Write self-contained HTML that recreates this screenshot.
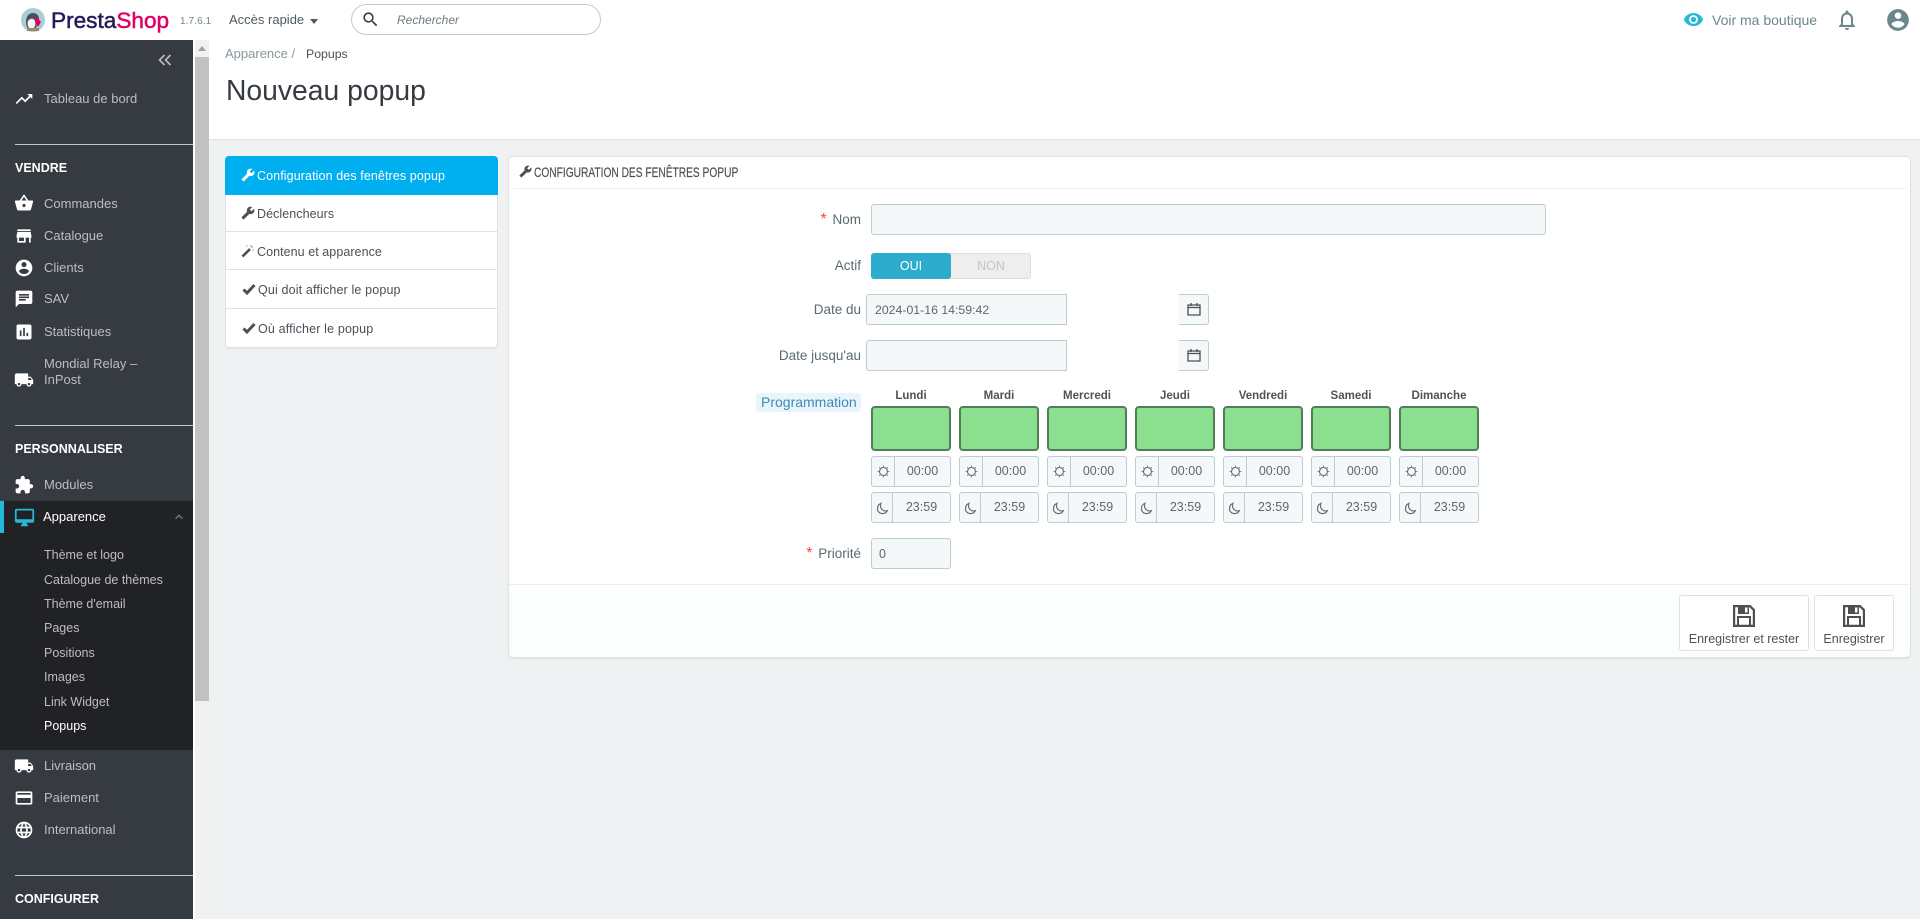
<!DOCTYPE html>
<html lang="fr">
<head>
<meta charset="utf-8">
<title>Nouveau popup</title>
<style>
*{box-sizing:border-box}
html,body{margin:0;padding:0;width:1920px;height:919px;overflow:hidden;background:#eff1f2;font-family:"Liberation Sans",sans-serif;color:#363a41}
.a{position:absolute}
.t{position:absolute;white-space:nowrap;line-height:20px;font-size:13px}
#top{left:0;top:0;width:1920px;height:40px;background:#fff}
#side{left:0;top:40px;width:193px;height:879px;background:#363a41;overflow:hidden}
#sub{left:0;top:461px;width:193px;height:249px;background:#202226}
.m{color:#bebebe;left:44px;font-size:13px}
.s{color:#bebebe;left:44px;font-size:12.5px}
.h{color:#fff;left:15px;font-weight:bold;font-size:12.5px}
.hr{left:15px;width:178px;height:1px;background:#bbcdd2}
svg{position:absolute;display:block}
.ic{fill:#fff;width:20px;height:20px;left:14px}
.tab{left:225px;width:273px;background:#fff;border:1px solid #dfe2e5;border-top:0}
.tabt{left:257px;color:#4a5058;font-size:12.5px;letter-spacing:.06px}
.lab{right:1059px;color:#5b6a72;text-align:right;font-size:13.5px}
.lab span{font-size:16px;line-height:16px;margin-right:2px}
.in{background:#f5f8f9;border:1px solid #bbcdd2;border-radius:3px}
.day{position:absolute;top:385px;width:80px;height:140px}
.day b{position:absolute;left:-8px;width:96px;top:1px;text-align:center;font-size:11.5px;line-height:20px;color:#4f5358}
.g{position:absolute;left:0;top:21px;width:80px;height:45px;background:#8bdf8f;border:2px solid #4f7f59;border-radius:4px}
.tm{position:absolute;left:0;width:80px;height:31px;background:#f5f8f9;border:1px solid #bbcdd2;border-radius:3px;font-size:12.5px;line-height:29px;color:#5c6770}
.tm i{position:absolute;top:0;bottom:0;width:1px;background:#bbcdd2}
.tm span{position:absolute;right:0;text-align:center;font-style:normal}
.su{top:71px}.mo{top:107px}
.su i{left:22px}.su span{left:23px}
.mo i{left:20px}.mo span{left:21px}
.tm svg{fill:none;stroke:#5c6770;stroke-width:1.1}
.su svg{left:5px;top:8px;width:13px;height:13px}
.mo svg{left:4px;top:9px;width:13px;height:13px}
.btn{top:595px;height:56px;background:#fff;border:1px solid #dfe2e5;border-radius:3px}
.btn svg{fill:#4d4f53}
.btn span{position:absolute;left:0;right:0;text-align:center;top:33px;font-size:12.5px;line-height:20px;color:#4d5058;white-space:nowrap}
</style>
</head>
<body>
<svg width="0" height="0" style="position:absolute">
<defs>
<symbol id="truck" viewBox="0 0 24 24"><path d="M20 8h-3V4H3c-1.100 0-2 .9-2 2v11h2c0 1.660 1.340 3 3 3s3-1.340 3-3h6c0 1.660 1.340 3 3 3s3-1.340 3-3h2v-5l-3-4zM6 18.500c-.83 0-1.500-.67-1.500-1.500s.67-1.500 1.500-1.500 1.500.67 1.500 1.500-.67 1.500-1.500 1.500zm13.500-9l1.960 2.500H17V9.500h2.500zm-1.500 9c-.83 0-1.500-.67-1.500-1.500s.67-1.500 1.500-1.500 1.500.67 1.500 1.500-.67 1.500-1.500 1.500z"/></symbol>
<symbol id="sun" viewBox="0 0 13 13"><circle cx="6.500" cy="6.500" r="4"/><path d="M6.500 .6v1.100M6.500 11.300v1.100M.6 6.500h1.100M11.300 6.500h1.100M2.300 2.300l.8.8M9.900 9.900l.8.8M2.300 10.700l.8-.8M9.900 3.100l.8-.8" stroke-width="1"/></symbol>
<symbol id="moon" viewBox="0 0 13 13"><path d="M5 1.200C2.800 2.200 1.500 4.200 1.500 6.700c0 2.900 2.200 4.900 4.900 4.900 2.200 0 4-1.100 5-3C8 9.800 4.300 7.500 4.600 3.700 4.600 2.800 4.700 2 5 1.200z"/></symbol>
<symbol id="save" viewBox="0 0 24 24"><path fill-rule="evenodd" d="M1 1h17.500L23 5.500V23H1zM3.200 3.200V20.800H5V12h14v8.800h1.800V6.500L17.500 3.200H17V10H6V3.200zM7 14v6.800h10V14zM13 3.500v5h2.500v-5z"/></symbol>
<symbol id="wrench" viewBox="0 0 24 24"><path transform="translate(24 0) scale(-1 1)" d="M22.700 19l-9.100-9.100c.9-2.300.4-5-1.500-6.900-2-2-5-2.400-7.400-1.300L9 6 6 9 1.600 4.700C.4 7.100.9 10.100 2.900 12.100c1.900 1.900 4.600 2.400 6.900 1.500l9.100 9.100c.4.4 1 .4 1.400 0l2.300-2.300c.5-.4.5-1.100.1-1.400z"/></symbol>
<symbol id="cal" viewBox="0 0 14 14"><path d="M1 3h12v10H1zM1 5.500h12M4 1v3M10 1v3" fill="none" stroke="#4d4f53" stroke-width="1.300"/></symbol>
</defs>
</svg>

<div id="top" class="a">
  <svg style="left:21px;top:8px" width="24" height="24" viewBox="0 0 24 24">
    <circle cx="12" cy="12" r="12" fill="#a8cfd9"/>
    <path d="M5 14c0-6 3-9 7-9s6 3 6 6l-2 3-1 7H8c-2-1-3-4-3-7z" fill="#4a5258"/>
    <path d="M7 13c2-3 6-3 7 0 1 3 0 6-2 8H9c-2-2-3-5-2-8z" fill="#f4f4f4"/>
    <path d="M15 8l5 6-3 5-3-5z" fill="#df0067"/>
    <rect x="6" y="20" width="12" height="3" fill="#a08a66"/>
  </svg>
  <div class="t" style="left:51px;top:9px;font-size:22.600px;line-height:24px;color:#251b5b;-webkit-text-stroke:.5px #251b5b">Presta<span style="color:#df0067;-webkit-text-stroke:.5px #df0067">Shop</span></div>
  <div class="t" style="left:180px;top:12px;font-size:10px;color:#6c868e;letter-spacing:.1px">1.7.6.1</div>
  <div class="t" style="left:229px;top:10px;font-size:13px;color:#4d5a62">Accès rapide</div>
  <div class="a" style="left:310px;top:19px;width:0;height:0;border-left:4.500px solid transparent;border-right:4.500px solid transparent;border-top:5px solid #4d5a62"></div>
  <div class="a" style="left:351px;top:4px;width:250px;height:31px;border:1px solid #bbcdd2;border-radius:16px;background:#fff"></div>
  <svg style="left:361px;top:10px;fill:#363a41" width="19" height="19" viewBox="0 0 24 24"><path d="M15.500 14h-.79l-.28-.27C15.410 12.590 16 11.110 16 9.500 16 5.910 13.090 3 9.500 3S3 5.910 3 9.500 5.910 16 9.500 16c1.610 0 3.090-.59 4.230-1.570l.27.28v.79l5 4.990L20.490 19l-4.990-5zm-6 0C7.010 14 5 11.990 5 9.500S7.010 5 9.500 5 14 7.010 14 9.500 11.990 14 9.500 14z"/></svg>
  <div class="t" style="left:397px;top:10px;font-size:12px;font-style:italic;color:#6c7a82">Rechercher</div>
  <svg style="left:1683px;top:9px;fill:#25b9d7" width="21" height="21" viewBox="0 0 24 24"><path d="M12 4.500C7 4.500 2.730 7.610 1 12c1.730 4.390 6 7.500 11 7.500s9.270-3.110 11-7.500c-1.730-4.390-6-7.500-11-7.500zM12 17c-2.760 0-5-2.240-5-5s2.240-5 5-5 5 2.240 5 5-2.240 5-5 5zm0-8c-1.660 0-3 1.340-3 3s1.340 3 3 3 3-1.340 3-3-1.340-3-3-3z"/></svg>
  <div class="t" style="left:1712px;top:10px;font-size:14px;color:#6c868e">Voir ma boutique</div>
  <svg style="left:1835px;top:8px;fill:#6c868e" width="24" height="24" viewBox="0 0 24 24"><path d="M12 22c1.100 0 2-.9 2-2h-4c0 1.100.9 2 2 2zm6-6v-5c0-3.070-1.640-5.640-4.500-6.320V4c0-.83-.67-1.500-1.500-1.500s-1.500.67-1.500 1.500v.68C7.630 5.360 6 7.920 6 11v5l-2 2v1h16v-1l-2-2zm-2 1H8v-6c0-2.480 1.510-4.500 4-4.500s4 2.020 4 4.500v6z"/></svg>
  <svg style="left:1885px;top:7px;fill:#6c868e" width="26" height="26" viewBox="0 0 24 24"><path d="M12 2C6.480 2 2 6.480 2 12s4.480 10 10 10 10-4.480 10-10S17.520 2 12 2zm0 3c1.660 0 3 1.340 3 3s-1.340 3-3 3-3-1.340-3-3 1.340-3 3-3zm0 14.200c-2.500 0-4.710-1.280-6-3.220.03-1.990 4-3.080 6-3.080 1.990 0 5.970 1.090 6 3.080-1.290 1.940-3.500 3.220-6 3.220z"/></svg>
</div>

<div id="side" class="a">
  <svg style="left:158px;top:14px;fill:none;stroke:#bebebe;stroke-width:1.600" width="14" height="12" viewBox="0 0 14 12"><path d="M6.500 1L1.500 6l5 5M12.500 1l-5 5 5 5"/></svg>
  <svg class="ic" style="top:49px;fill:#fff" viewBox="0 0 24 24"><path d="M16 6l2.290 2.290-4.880 4.880-4-4L2 16.590 3.410 18l6-6 4 4 6.300-6.290L22 12V6z"/></svg>
  <div class="t m" style="top:49px">Tableau de bord</div>
  <div class="a hr" style="top:104px"></div>
  <div class="t h" style="top:118px">VENDRE</div>
  <svg class="ic" style="top:153px" viewBox="0 0 24 24"><path d="M17.210 9l-4.380-6.560c-.19-.28-.51-.42-.83-.42-.32 0-.64.14-.83.430L6.790 9H2c-.55 0-1 .45-1 1 0 .09.01.18.04.27l2.540 9.270c.23.84 1 1.460 1.920 1.460h13c.92 0 1.690-.62 1.930-1.460l2.540-9.270L23 10c0-.55-.45-1-1-1h-4.790zM9 9l3-4.400L15 9H9zm3 8c-1.100 0-2-.9-2-2s.9-2 2-2 2 .9 2 2-.9 2-2 2z"/></svg>
  <div class="t m" style="top:154px">Commandes</div>
  <svg class="ic" style="top:186px" viewBox="0 0 24 24"><path d="M20 4H4v2h16V4zm1 10v-2l-1-5H4l-1 5v2h1v6h10v-6h4v6h2v-6h1zm-9 4H6v-4h6v4z"/></svg>
  <div class="t m" style="top:186px">Catalogue</div>
  <svg class="ic" style="top:218px" viewBox="0 0 24 24"><path d="M12 2C6.480 2 2 6.480 2 12s4.480 10 10 10 10-4.480 10-10S17.520 2 12 2zm0 3c1.660 0 3 1.340 3 3s-1.340 3-3 3-3-1.340-3-3 1.340-3 3-3zm0 14.200c-2.500 0-4.710-1.280-6-3.220.03-1.990 4-3.080 6-3.080 1.990 0 5.970 1.090 6 3.080-1.290 1.940-3.500 3.220-6 3.220z"/></svg>
  <div class="t m" style="top:218px">Clients</div>
  <svg class="ic" style="top:249px" viewBox="0 0 24 24"><path d="M20 2H4c-1.100 0-1.990.9-1.990 2L2 22l4-4h14c1.100 0 2-.9 2-2V4c0-1.100-.9-2-2-2zM6 9h12v2H6V9zm8 5H6v-2h8v2zm4-6H6V6h12v2z"/></svg>
  <div class="t m" style="top:249px">SAV</div>
  <svg class="ic" style="top:282px" viewBox="0 0 24 24"><path d="M19 3H5c-1.100 0-2 .9-2 2v14c0 1.100.9 2 2 2h14c1.100 0 2-.9 2-2V5c0-1.100-.9-2-2-2zM9 17H7v-7h2v7zm4 0h-2V7h2v10zm4 0h-2v-4h2v4z"/></svg>
  <div class="t m" style="top:282px">Statistiques</div>
  <svg class="ic" style="top:330px"><use href="#truck"/></svg>
  <div class="t m" style="top:314px">Mondial Relay –</div>
  <div class="t m" style="top:330px">InPost</div>
  <div class="a hr" style="top:385px"></div>
  <div class="t h" style="top:399px">PERSONNALISER</div>
  <svg class="ic" style="top:435px" viewBox="0 0 24 24"><path d="M20.500 11H19V7c0-1.100-.9-2-2-2h-4V3.500C13 2.120 11.880 1 10.500 1S8 2.120 8 3.500V5H4c-1.100 0-1.990.9-1.990 2v3.800H3.500c1.490 0 2.700 1.210 2.700 2.700s-1.210 2.700-2.700 2.700H2V20c0 1.100.9 2 2 2h3.800v-1.500c0-1.490 1.210-2.700 2.700-2.700 1.490 0 2.700 1.210 2.700 2.700V22H17c1.100 0 2-.9 2-2v-4h1.500c1.380 0 2.500-1.120 2.500-2.500S21.880 11 20.500 11z"/></svg>
  <div class="t m" style="top:435px">Modules</div>

  <div id="sub" class="a"></div>
  <div class="a" style="left:0;top:461px;width:4px;height:32px;background:#25b9d7"></div>
  <svg class="ic" style="top:467px;left:14px;fill:#25b9d7;width:21px;height:21px" viewBox="0 0 24 24"><path d="M21 2H3c-1.100 0-2 .9-2 2v12c0 1.100.9 2 2 2h7l-2 3v1h8v-1l-2-3h7c1.100 0 2-.9 2-2V4c0-1.100-.9-2-2-2zm0 12H3V4h18v10z"/></svg>
  <div class="t m" style="top:467px;left:43px;color:#fff">Apparence</div>
  <svg style="left:171px;top:468px;fill:#6c868e" width="16" height="18" viewBox="0 0 24 24"><path d="M12 8l-6 6 1.410 1.410L12 10.830l4.590 4.580L18 14z"/></svg>
  <div class="t s" style="top:505px">Thème et logo</div>
  <div class="t s" style="top:530px">Catalogue de thèmes</div>
  <div class="t s" style="top:554px">Thème d'email</div>
  <div class="t s" style="top:578px">Pages</div>
  <div class="t s" style="top:603px">Positions</div>
  <div class="t s" style="top:627px">Images</div>
  <div class="t s" style="top:652px">Link Widget</div>
  <div class="t s" style="top:676px;color:#fff">Popups</div>

  <svg class="ic" style="top:716px"><use href="#truck"/></svg>
  <div class="t m" style="top:716px">Livraison</div>
  <svg class="ic" style="top:748px" viewBox="0 0 24 24"><path d="M20 4H4c-1.110 0-1.990.89-1.990 2L2 18c0 1.110.89 2 2 2h16c1.110 0 2-.89 2-2V6c0-1.110-.89-2-2-2zm0 14H4v-6h16v6zm0-10H4V6h16v2z"/></svg>
  <div class="t m" style="top:748px">Paiement</div>
  <svg class="ic" style="top:780px" viewBox="0 0 24 24"><path d="M11.990 2C6.470 2 2 6.480 2 12s4.470 10 9.990 10C17.520 22 22 17.520 22 12S17.520 2 11.990 2zm6.930 6h-2.950c-.32-1.250-.78-2.450-1.380-3.560 1.840.63 3.370 1.910 4.330 3.560zM12 4.040c.83 1.200 1.480 2.530 1.910 3.960h-3.820c.43-1.430 1.080-2.760 1.910-3.960zM4.260 14C4.100 13.360 4 12.690 4 12s.1-1.360.26-2h3.380c-.08.66-.14 1.320-.14 2 0 .68.06 1.340.14 2H4.260zm.82 2h2.950c.32 1.250.78 2.450 1.380 3.560-1.840-.63-3.370-1.900-4.330-3.560zm2.950-8H5.080c.96-1.660 2.490-2.930 4.330-3.560C8.810 5.550 8.350 6.750 8.030 8zM12 19.960c-.83-1.200-1.480-2.530-1.910-3.960h3.820c-.43 1.430-1.080 2.760-1.910 3.960zM14.340 14H9.660c-.09-.66-.16-1.320-.16-2 0-.68.07-1.350.16-2h4.680c.09.650.16 1.320.16 2 0 .68-.07 1.340-.16 2zm.25 5.560c.6-1.110 1.060-2.310 1.380-3.560h2.950c-.96 1.650-2.490 2.930-4.330 3.560zM16.360 14c.08-.66.14-1.320.14-2 0-.68-.06-1.340-.14-2h3.380c.16.640.26 1.310.26 2s-.1 1.360-.26 2h-3.380z"/></svg>
  <div class="t m" style="top:780px">International</div>
  <div class="a hr" style="top:835px"></div>
  <div class="t h" style="top:849px">CONFIGURER</div>
</div>

<!-- scrollbar -->
<div class="a" style="left:193px;top:40px;width:16px;height:879px;background:#f1f1f1"></div>
<div class="a" style="left:193px;top:40px;width:2px;height:879px;background:#fff"></div>
<div class="a" style="left:198px;top:46px;width:0;height:0;border-left:4px solid transparent;border-right:4px solid transparent;border-bottom:5px solid #a3a3a3"></div>
<div class="a" style="left:195px;top:57px;width:14px;height:644px;background:#c1c1c1"></div>

<!-- header -->
<div class="a" style="left:209px;top:40px;width:1711px;height:100px;background:#fff;border-bottom:1px solid #dfe2e5"></div>
<div class="t" style="left:225px;top:44px;font-size:13px;color:#8a969c">Apparence /</div>
<div class="t" style="left:306px;top:44px;font-size:12.300px;color:#4d5058">Popups</div>
<div class="t" style="left:226px;top:70px;font-size:28.300px;line-height:40px;color:#363a41">Nouveau popup</div>

<!-- tabs -->
<div class="a" style="left:225px;top:156px;width:273px;height:39px;background:#00aff0;border-radius:4px 4px 0 0"></div>
<div class="a tab" style="top:195px;height:37px"></div>
<div class="a tab" style="top:232px;height:38px"></div>
<div class="a tab" style="top:270px;height:39px"></div>
<div class="a tab" style="top:309px;height:39px;border-radius:0 0 4px 4px;box-shadow:0 1px 1px rgba(0,0,0,.05)"></div>
<svg style="left:241px;top:168px;fill:#fff" width="14" height="14"><use href="#wrench"/></svg>
<div class="t tabt" style="top:166px;color:#fff;letter-spacing:.1px">Configuration des fenêtres popup</div>
<svg style="left:241px;top:206px;fill:#4d4f53" width="14" height="14"><use href="#wrench"/></svg>
<div class="t tabt" style="top:204px">Déclencheurs</div>
<svg style="left:241px;top:244px" width="14" height="14" viewBox="0 0 14 14"><path d="M1.500 12.500L9 5" stroke="#4d4f53" stroke-width="2.600"/><path d="M10 1v2M12 3h-2M13 6h-1.500M5 2h1.500" stroke="#999" stroke-width="1"/></svg>
<div class="t tabt" style="top:242px">Contenu et apparence</div>
<svg style="left:242px;top:283px" width="14" height="13" viewBox="0 0 14 13"><path d="M1.500 6.500L5 10l7.500-8" fill="none" stroke="#4d4f53" stroke-width="3"/></svg>
<div class="t tabt" style="top:280px;left:258px;letter-spacing:.15px">Qui doit afficher le popup</div>
<svg style="left:242px;top:322px" width="14" height="13" viewBox="0 0 14 13"><path d="M1.500 6.500L5 10l7.500-8" fill="none" stroke="#4d4f53" stroke-width="3"/></svg>
<div class="t tabt" style="top:319px;left:258px;letter-spacing:.15px">Où afficher le popup</div>

<!-- panel -->
<div class="a" style="left:508px;top:156px;width:1403px;height:502px;background:#fff;border:1px solid #dfe2e5;border-radius:5px;box-shadow:0 1px 1px rgba(0,0,0,.08)"></div>
<div class="a" style="left:513px;top:188px;width:1393px;height:1px;background:#eceff1"></div>
<svg style="left:519px;top:165px;fill:#4d4f53" width="13" height="13"><use href="#wrench"/></svg>
<div class="t" style="left:534px;top:162px;font-size:14px;color:#4d5058;transform:scaleX(.728);transform-origin:0 50%;-webkit-text-stroke:.2px #4d5058">CONFIGURATION DES FENÊTRES POPUP</div>

<!-- form -->
<div class="t lab" style="top:210px"><span style="color:#f54c3e">*</span> Nom</div>
<div class="a in" style="left:871px;top:204px;width:675px;height:31px"></div>
<div class="t lab" style="top:256px">Actif</div>
<div class="a" style="left:871px;top:253px;width:160px;height:26px;background:#eee;border:1px solid #ddd;border-radius:3px"></div>
<div class="a" style="left:871px;top:253px;width:80px;height:26px;background:#2eacce;border-radius:3px;color:#fff;text-align:center;line-height:26px;font-size:12.500px">OUI</div>
<div class="a" style="left:951px;top:253px;width:80px;height:26px;color:#c3c3c3;text-align:center;line-height:26px;font-size:12.500px">NON</div>
<div class="t lab" style="top:300px">Date du</div>
<div class="a in" style="left:866px;top:294px;width:201px;height:31px;border-radius:3px 0 0 3px"></div>
<div class="t" style="left:875px;top:300px;font-size:12.300px;color:#5c6770">2024-01-16 14:59:42</div>
<div class="a in" style="left:1179px;top:294px;width:30px;height:31px;border-left:0;border-radius:0 3px 3px 0"></div>
<svg style="left:1187px;top:302px" width="14" height="14"><use href="#cal"/></svg>
<div class="t lab" style="top:346px">Date jusqu'au</div>
<div class="a in" style="left:866px;top:340px;width:201px;height:31px;border-radius:3px 0 0 3px"></div>
<div class="a in" style="left:1179px;top:340px;width:30px;height:31px;border-left:0;border-radius:0 3px 3px 0"></div>
<svg style="left:1187px;top:348px" width="14" height="14"><use href="#cal"/></svg>

<div class="a" style="left:756px;top:393px;width:105px;height:19px;background:#e9f4fb;border-radius:3px"></div>
<div class="t" style="left:761px;top:392px;font-size:14px;color:#3f8ab8">Programmation</div>

<div class="day" style="left:871px"><b>Lundi</b><div class="g"></div><div class="tm su"><svg><use href="#sun"/></svg><i></i><span>00:00</span></div><div class="tm mo"><svg><use href="#moon"/></svg><i></i><span>23:59</span></div></div>
<div class="day" style="left:959px"><b>Mardi</b><div class="g"></div><div class="tm su"><svg><use href="#sun"/></svg><i></i><span>00:00</span></div><div class="tm mo"><svg><use href="#moon"/></svg><i></i><span>23:59</span></div></div>
<div class="day" style="left:1047px"><b>Mercredi</b><div class="g"></div><div class="tm su"><svg><use href="#sun"/></svg><i></i><span>00:00</span></div><div class="tm mo"><svg><use href="#moon"/></svg><i></i><span>23:59</span></div></div>
<div class="day" style="left:1135px"><b>Jeudi</b><div class="g"></div><div class="tm su"><svg><use href="#sun"/></svg><i></i><span>00:00</span></div><div class="tm mo"><svg><use href="#moon"/></svg><i></i><span>23:59</span></div></div>
<div class="day" style="left:1223px"><b>Vendredi</b><div class="g"></div><div class="tm su"><svg><use href="#sun"/></svg><i></i><span>00:00</span></div><div class="tm mo"><svg><use href="#moon"/></svg><i></i><span>23:59</span></div></div>
<div class="day" style="left:1311px"><b>Samedi</b><div class="g"></div><div class="tm su"><svg><use href="#sun"/></svg><i></i><span>00:00</span></div><div class="tm mo"><svg><use href="#moon"/></svg><i></i><span>23:59</span></div></div>
<div class="day" style="left:1399px"><b>Dimanche</b><div class="g"></div><div class="tm su"><svg><use href="#sun"/></svg><i></i><span>00:00</span></div><div class="tm mo"><svg><use href="#moon"/></svg><i></i><span>23:59</span></div></div>

<div class="t lab" style="top:544px"><span style="color:#f54c3e">*</span> Priorité</div>
<div class="a in" style="left:871px;top:538px;width:80px;height:31px"></div>
<div class="t" style="left:879px;top:544px;font-size:12.500px;color:#5c6770">0</div>

<!-- footer -->
<div class="a" style="left:509px;top:584px;width:1401px;height:73px;background:#fcfdfd;border-top:1px solid #eceff1;border-radius:0 0 5px 5px"></div>
<div class="a btn" style="left:1679px;width:130px"><svg style="left:52px;top:8px" width="24" height="24"><use href="#save"/></svg><span>Enregistrer et rester</span></div>
<div class="a btn" style="left:1814px;width:80px"><svg style="left:27px;top:8px" width="24" height="24"><use href="#save"/></svg><span>Enregistrer</span></div>
</body>
</html>
